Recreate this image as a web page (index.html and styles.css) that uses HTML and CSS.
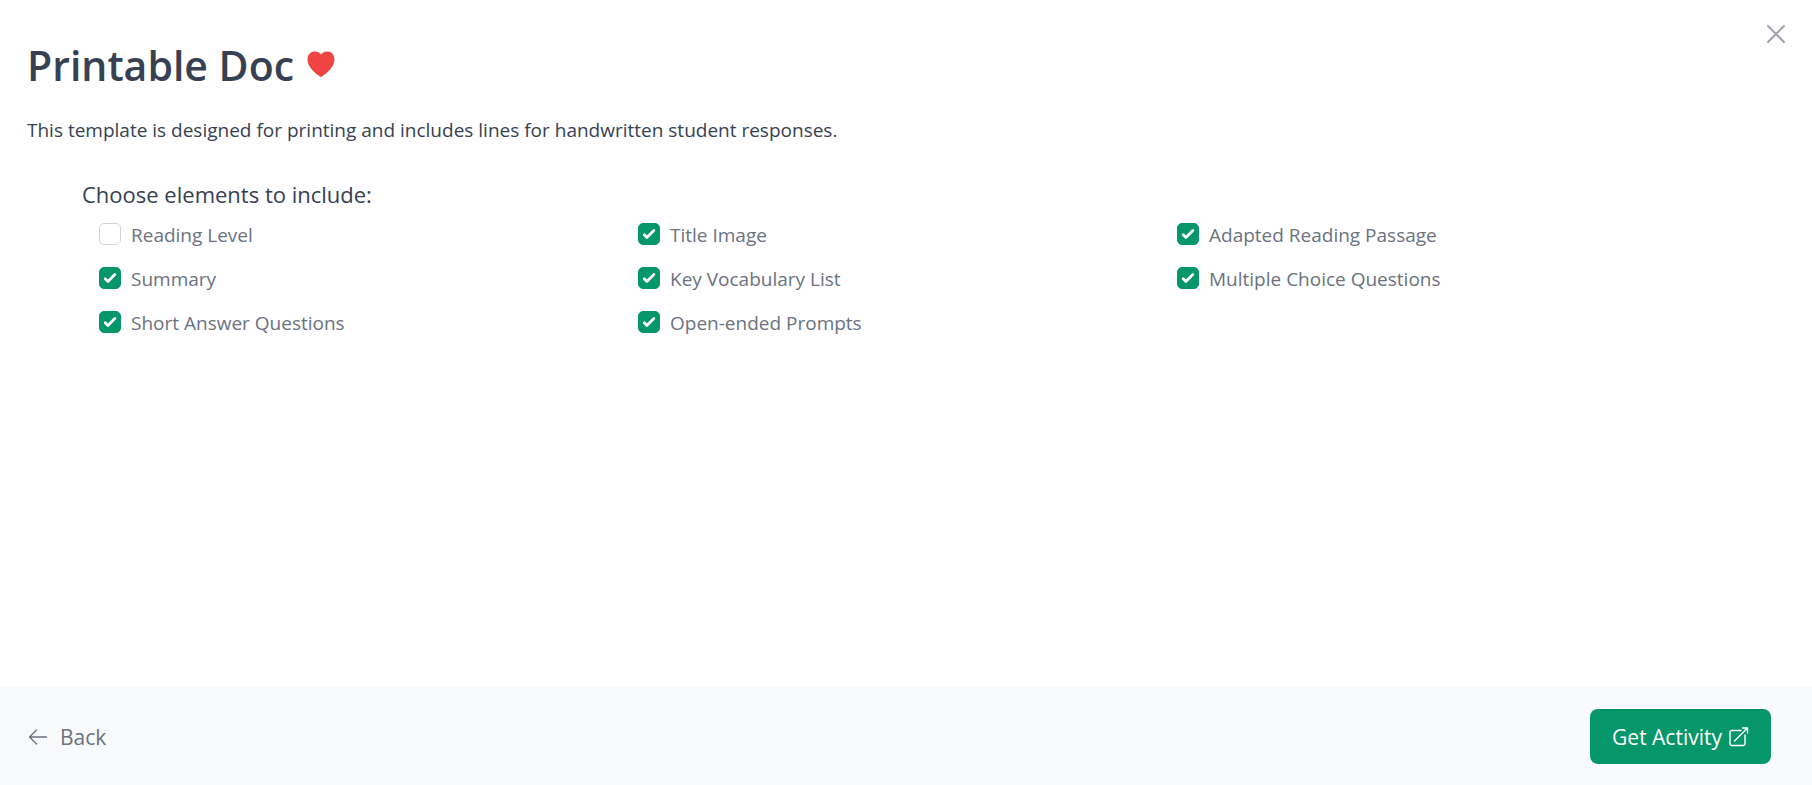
FILE: index.html
```html
<!DOCTYPE html>
<html lang="en">
  <head>
    <meta charset="UTF-8" />
    <meta name="viewport" content="width=device-width, initial-scale=1.0" />
    <title>Printable Doc</title>
    <link rel="stylesheet" href="styles.css">
  </head>
  <body>
    <main class="content">
      <header class="header">
        <h1 class="title">Printable Doc</h1>
        <svg class="heart" viewBox="0 0 28 26" aria-hidden="true">
          <path d="M14 26C12 25 .5 17.500.5 8.500C.5 3.500 3.800.500 7.500.500C10.500.500 13 1.500 14 3.500C15 1.500 17.500.500 20.500.500C24.200.500 27.500 3.500 27.500 8.500C27.500 17.500 16 25 14 26Z" />
        </svg>
        <button class="close-btn" type="button" aria-label="Close">
          <svg viewBox="0 0 18 18"><path d="M1 1l16 16M17 1L1 17" /></svg>
        </button>
      </header>

      <p class="description">This template is designed for printing and includes lines for handwritten student responses.</p>

      <fieldset class="elements">
        <legend class="elements-title">Choose elements to include:</legend>
        <div class="options">
          <label class="option"><input type="checkbox" name="readingLevel" /><span>Reading Level</span></label>
          <label class="option"><input type="checkbox" name="titleImage" checked /><span>Title Image</span></label>
          <label class="option"><input type="checkbox" name="passage" checked /><span>Adapted Reading Passage</span></label>
          <label class="option"><input type="checkbox" name="summary" checked /><span>Summary</span></label>
          <label class="option"><input type="checkbox" name="vocabulary" checked /><span>Key Vocabulary List</span></label>
          <label class="option"><input type="checkbox" name="multipleChoice" checked /><span>Multiple Choice Questions</span></label>
          <label class="option"><input type="checkbox" name="shortAnswer" checked /><span>Short Answer Questions</span></label>
          <label class="option"><input type="checkbox" name="openEnded" checked /><span>Open-ended Prompts</span></label>
        </div>
      </fieldset>
    </main>

    <footer class="footer">
      <button class="back-btn" type="button">
        <svg viewBox="0 0 20 18" stroke-width="1.4" aria-hidden="true"><path d="M8.500 2L1.500 9l7 7M1.500 9h17" /></svg>
        Back
      </button>
      <button class="activity-btn" type="button">
        Get Activity
        <svg viewBox="0 0 20 20" stroke-width="1.4" aria-hidden="true"><path d="M12 3.500H3A2 2 0 0 0 1 5.500v11a2 2 0 0 0 2 2h11a2 2 0 0 0 2-2V8M5.500 14L18.500 1M13.500 1h5v5" /></svg>
      </button>
    </footer>
  </body>
</html>
```

FILE: styles.css
```css
* {
  box-sizing: border-box;
}

body {
  margin: 0;
  min-height: 100vh;
  display: flex;
  flex-direction: column;
  background: #fff;
  color: #374151;
  font-family: "Open Sans", "Noto Sans", sans-serif;
  font-size: 19px;
  line-height: 28px;
}

button {
  padding: 0;
  border: none;
  background: none;
  font: inherit;
  cursor: pointer;
}

svg {
  display: block;
  fill: none;
  stroke: currentColor;
  stroke-linecap: round;
  stroke-linejoin: round;
}

.content {
  flex: 1;
  padding: 25px 27px 24px;
}

/* Title row */
.header {
  display: flex;
  align-items: flex-start;
  gap: 13px;
}

.title {
  margin: 15px 0 0;
  font-size: 41px;
  line-height: 50px;
  font-weight: 600;
}

.heart {
  width: 28px;
  height: 26px;
  margin-top: 26px;
  fill: #ef4444;
  stroke: none;
}

.close-btn {
  margin-left: auto;
  color: #9ca3af;
}

.close-btn svg {
  width: 18px;
  height: 18px;
  stroke-width: 2;
}

.description {
  margin: 26px 0 0;
}

/* Checkbox list */
.elements {
  margin: 33px 55px 0;
  padding: 0;
  border: none;
}

.elements-title {
  padding: 0;
  font-size: 22px;
  line-height: 34px;
}

.options {
  display: grid;
  grid-template-columns: repeat(3, 1fr);
  row-gap: 16px;
  padding: 10px 14px 0 17px;
}

.option {
  display: flex;
  align-items: flex-start;
  gap: 10px;
  color: #6b7280;
}

.option input {
  appearance: none;
  width: 22px;
  height: 22px;
  margin: 2px 0 0;
  border: 1px solid #d1d5db;
  border-radius: 5px;
  background: #fff;
}

.option input:checked {
  border-color: #059669;
  background: #059669 url("data:image/svg+xml,%3Csvg viewBox='0 0 16 16' fill='white' xmlns='http://www.w3.org/2000/svg'%3E%3Cpath d='M12.207 4.793a1 1 0 010 1.414l-5 5a1 1 0 01-1.414 0l-2-2a1 1 0 011.414-1.414L6.500 9.086l4.293-4.293a1 1 0 011.414 0z'/%3E%3C/svg%3E") center / 22px no-repeat;
}

/* Bottom bar */
.footer {
  display: flex;
  align-items: center;
  justify-content: space-between;
  padding: 22px 41px 21px 28px;
  background: #f9fafb;
  font-size: 21px;
}

.back-btn {
  display: flex;
  align-items: center;
  gap: 12px;
  color: #6b7280;
}

.back-btn svg {
  width: 20px;
  height: 18px;
}

.activity-btn {
  display: flex;
  align-items: center;
  gap: 7px;
  height: 55px;
  padding: 0 22px;
  border-radius: 8px;
  background: #059669;
  color: #fff;
}

.activity-btn svg {
  width: 20px;
  height: 20px;
}
```
